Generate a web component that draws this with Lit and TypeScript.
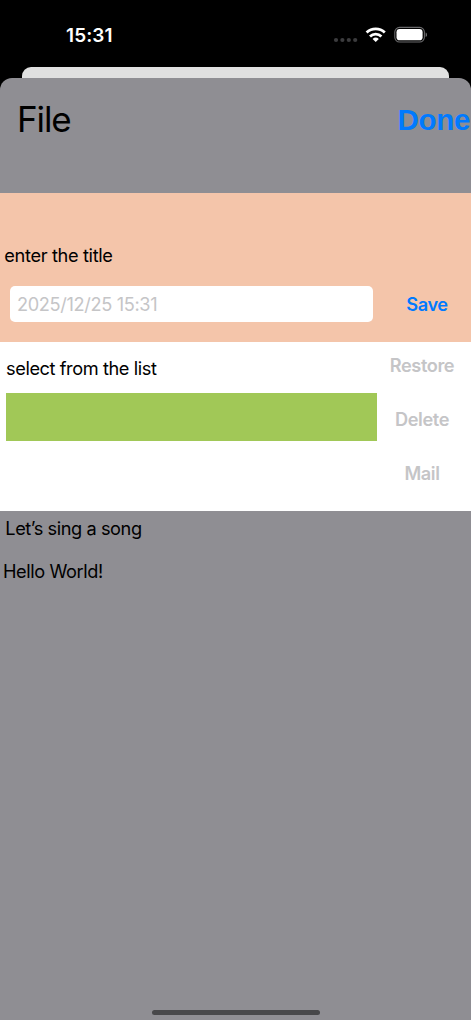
import { LitElement, html, css } from "lit";
import { customElement } from "lit/decorators.js";

@customElement("status-bar")
class StatusBar extends LitElement {
  static styles = css`
    :host { display: flex; height: 67px; padding: 0 44px 0 66px; box-sizing: border-box; justify-content: space-between; color: #fff; }
    .time { margin-top: 24px; line-height: 24px; font-size: 19px; font-weight: 600; letter-spacing: 0.1px; }
    .icons { margin-top: 24px; width: 94px; height: 22px; }
  `;
  render() {
    return html`
      <span class="time">15:31</span>
      <svg class="icons" viewBox="333 24 94 22">
        <g fill="#3c3c3e">
          <circle cx="336" cy="40" r="2.1" /><circle cx="342.4" cy="40" r="2.1" />
          <circle cx="348.8" cy="40" r="2.1" /><circle cx="355.2" cy="40" r="2.1" />
        </g>
        <g fill="none" stroke="#fff" stroke-width="2.8">
          <path d="M366.6 32.6A13.2 13.2 0 0 1 384.8 32.6" />
          <path d="M370 36.4A8.2 8.2 0 0 1 381.4 36.4" />
        </g>
        <path fill="#fff" d="M375.7 42L372.6 38.9A4.6 4.6 0 0 1 378.8 38.9Z" />
        <rect x="394.8" y="27.4" width="29.6" height="14.6" rx="4.7" fill="none" stroke="#69696b" stroke-width="1.1" />
        <rect x="396.5" y="29.1" width="26.1" height="11.2" rx="3.1" fill="#fff" />
        <path fill="#69696b" d="M425.6 32.4q1.5.6 1.5 2.3t-1.5 2.3z" />
      </svg>
    `;
  }
}

@customElement("app-root")
class AppRoot extends LitElement {
  static styles = css`
    :host { display: flex; flex-direction: column; height: 1020px; background: #000; color: #000; font-family: Inter, "Liberation Sans", sans-serif; font-size: 18.2px; white-space: nowrap; overflow: hidden; }
    .behind { flex: none; height: 10.5px; margin: 0 22px; background: #e0e0e0; border-radius: 9px 9px 0 0; }
    .sheet { flex: 1; display: flex; flex-direction: column; background: #8f8e93; border-radius: 12px 12px 0 0; }
    header { display: flex; justify-content: space-between; height: 115.5px; box-sizing: border-box; padding: 21px 1px 0 17px; }
    h1 { margin: 0; font-size: 35px; font-weight: 400; line-height: 40px; letter-spacing: -1.1px; }
    .done { margin-top: 1px; font-family: "Liberation Sans", Arial, sans-serif; font-size: 29.5px; font-weight: 700; line-height: 40px; letter-spacing: -0.3px; color: #007aff; }
    .title-area { height: 149px; box-sizing: border-box; padding-top: 50px; background: #f4c5aa; }
    .label { line-height: 24px; }
    .enter { padding-left: 4.3px; letter-spacing: -0.34px; }
    .entry { display: flex; align-items: center; margin-top: 19px; padding-left: 10px; }
    .field { width: 363px; height: 36px; box-sizing: border-box; padding-left: 7px; line-height: 36px; border-radius: 5px; background: #fff; color: #c5c5c7; letter-spacing: -0.35px; }
    .btn { font-weight: 600; line-height: 24px; text-align: center; }
    .save { flex: 1; padding-left: 10px; color: #007aff; letter-spacing: -0.45px; }
    .list-area { display: flex; height: 169px; background: #fff; }
    .list { width: 371px; padding: 14px 0 0 6px; }
    .select { letter-spacing: -0.41px; }
    .row { height: 48px; margin-top: 13.4px; background: #a1c857; }
    .actions { flex: 1; display: flex; flex-direction: column; gap: 30px; padding: 11px 4px 0 0; color: #c5c5c7; letter-spacing: -0.4px; }
    .song { padding: 5px 0 0 5.3px; letter-spacing: -0.43px; }
    .hello { padding: 19px 0 0 3px; letter-spacing: -0.42px; }
    .home { width: 168px; height: 5.4px; margin: auto auto 5px 151.6px; border-radius: 3px; background: #48484a; }
  `;
  render() {
    return html`
      <status-bar></status-bar>
      <div class="behind"></div>
      <main class="sheet">
        <header><h1>File</h1><span class="done">Done</span></header>
        <section class="title-area">
          <div class="label enter">enter the title</div>
          <div class="entry">
            <div class="field">2025/12/25 15:31</div>
            <div class="btn save">Save</div>
          </div>
        </section>
        <section class="list-area">
          <div class="list">
            <div class="label select">select from the list</div>
            <div class="row"></div>
          </div>
          <div class="actions">
            ${["Restore", "Delete", "Mail"].map((name) => html`<div class="btn">${name}</div>`)}
          </div>
        </section>
        <div class="label song">Let’s sing a song</div>
        <div class="label hello">Hello World!</div>
        <div class="home"></div>
      </main>
    `;
  }
}
